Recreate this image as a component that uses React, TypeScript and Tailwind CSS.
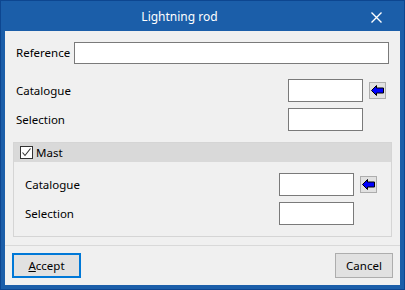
function ArrowButton() {
  return (
    <button className="w-[17px] h-[17px] bg-[#e1e1e1] border border-[#adadad] flex items-center justify-center">
      <svg width="13" height="11" viewBox="0 0 13 11">
        <polygon
          points="0.5,5.5 5.5,0.5 5.5,3 12.5,3 12.5,8 5.5,8 5.5,10.5"
          fill="#0000ff"
          stroke="#000"
          strokeWidth="1"
        />
      </svg>
    </button>
  );
}

function Field({ w = "w-[75px]" }: { w?: string }) {
  return <div className={`${w} h-[23px] bg-white border border-[#7a7a7a]`} />;
}

export default function App() {
  return (
    <div className="w-[405px] h-[290px] bg-[#1b5ea9] border border-[#0d4690] flex flex-col font-['Noto_Sans',sans-serif] text-[11.5px] text-black">
      <div className="h-[30px] relative flex items-center justify-center pr-[46px] text-white text-[12px]">
        <span className="mt-[1px]">Lightning rod</span>
        <svg className="absolute left-[370px] top-[11px]" width="11" height="11" viewBox="0 0 11 11">
          <path d="M0.5 0.5 L10.5 10.5 M10.5 0.5 L0.5 10.5" stroke="#fff" strokeWidth="1.4" />
        </svg>
      </div>

      <div className="mx-[4px] mb-[4px] flex-1 bg-[#f0f0f0] flex flex-col">
        <div className="flex items-center h-[22px] mt-[11px] pl-[11px] pr-[11px]">
          <span className="w-[58px]">Reference</span>
          <div className="flex-1 h-[22px] bg-white border border-[#7a7a7a]" />
        </div>

        <div className="flex items-center h-[23px] mt-[15px] pl-[11px]">
          <span className="w-[272px]">Catalogue</span>
          <Field />
          <div className="ml-[6px]">
            <ArrowButton />
          </div>
        </div>

        <div className="flex items-center h-[23px] mt-[6px] pl-[11px]">
          <span className="w-[272px]">Selection</span>
          <Field />
        </div>

        <div className="mx-[8px] mt-[11px] h-[95px] border border-[#d5d5d5] flex flex-col">
          <div className="h-[19px] bg-[#d9d9d9] flex items-center pl-[6px] gap-[3px]">
            <div className="w-[13px] h-[13px] bg-white border border-[#333] flex items-center justify-center">
              <svg width="11" height="11" viewBox="0 0 11 11">
                <path d="M1.5 5.5 L4 8.5 L9.5 1.5" fill="none" stroke="#333" strokeWidth="1.1" />
              </svg>
            </div>
            <span>Mast</span>
          </div>

          <div className="flex items-center h-[23px] mt-[11px] pl-[11px]">
            <span className="w-[254px]">Catalogue</span>
            <Field />
            <div className="ml-[6px]">
              <ArrowButton />
            </div>
          </div>

          <div className="flex items-center h-[23px] mt-[6px] pl-[11px]">
            <span className="w-[254px]">Selection</span>
            <Field />
          </div>
        </div>

        <div className="mt-[8px] border-t border-[#d9d9d9] flex justify-between items-start px-[7px] pt-[7px]">
          <button className="w-[69px] h-[25px] bg-[#e1e1e1] border-2 border-[#0078d7] flex items-center justify-center">
            <span>
              <span className="underline">A</span>ccept
            </span>
          </button>
          <button className="w-[58px] h-[25px] bg-[#e1e1e1] border border-[#adadad] flex items-center justify-center">
            Cancel
          </button>
        </div>
      </div>
    </div>
  );
}
